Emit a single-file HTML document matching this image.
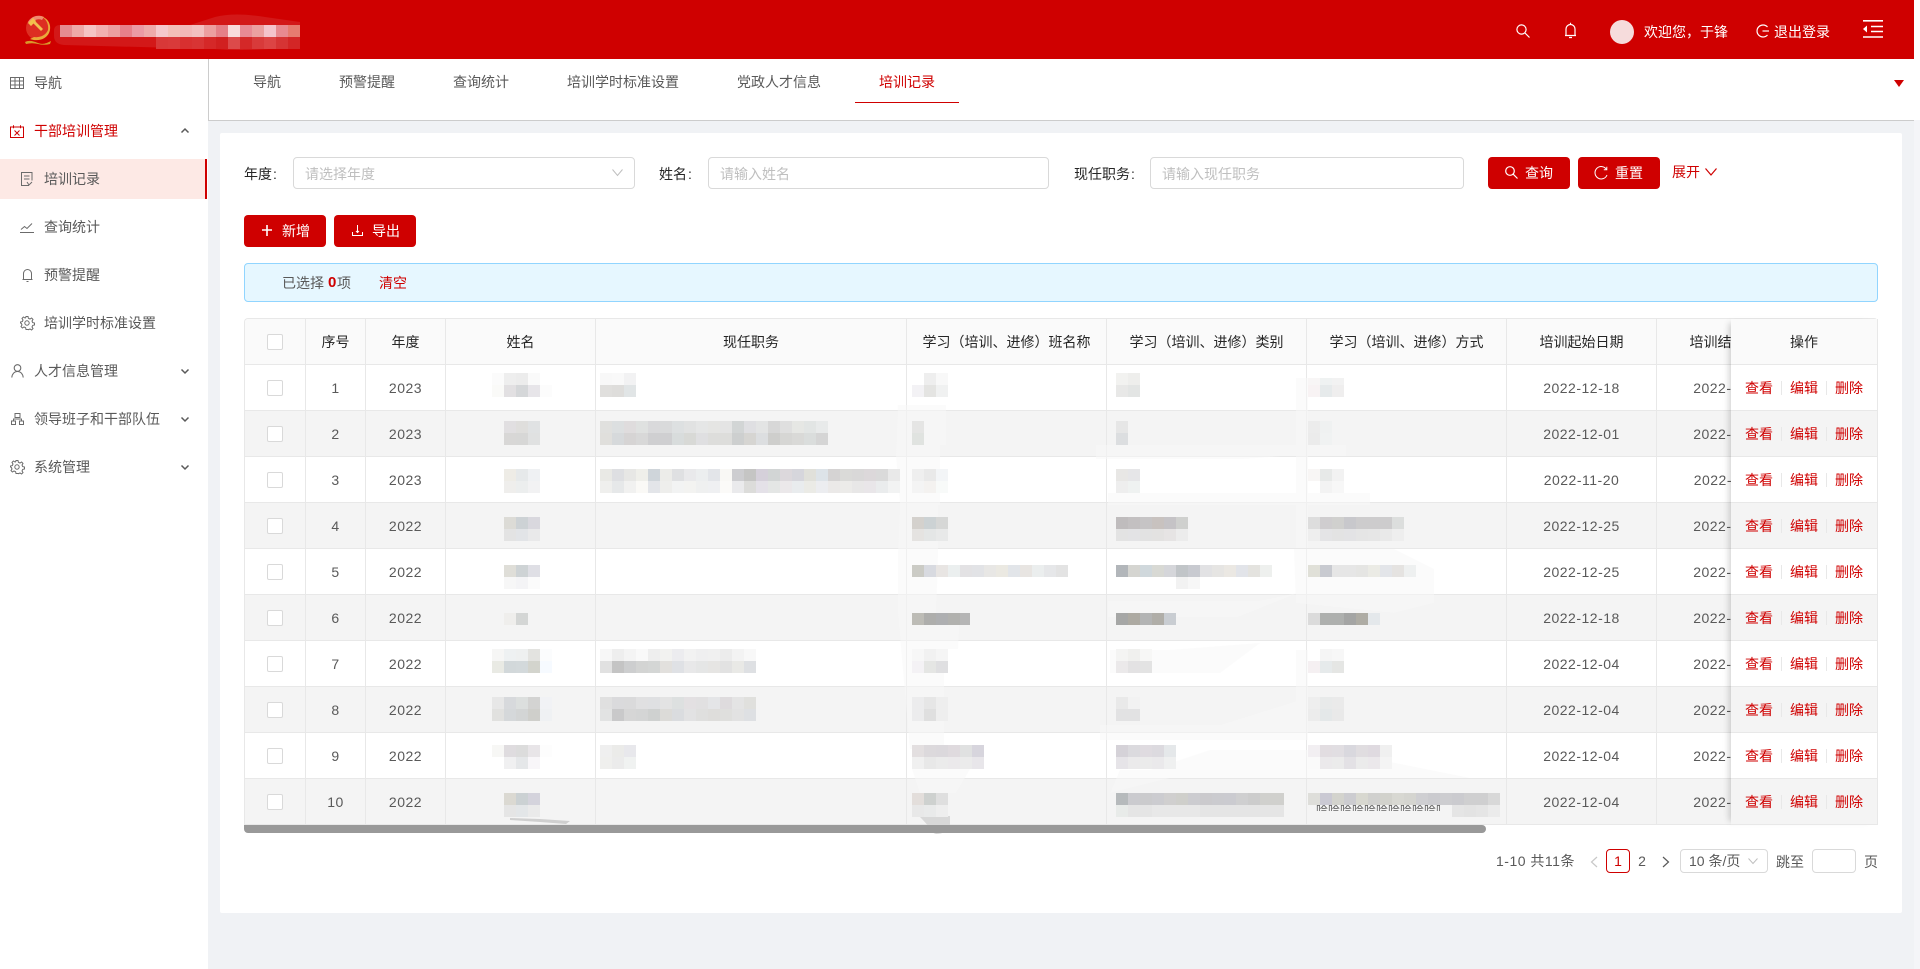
<!DOCTYPE html>
<html lang="zh-CN"><head><meta charset="utf-8"><title>培训记录</title>
<style>
*{box-sizing:border-box}
html,body{margin:0;padding:0;width:1920px;height:969px;overflow:hidden;background:#f0f2f5;font:14px/20px "Liberation Sans","Noto Sans CJK SC",sans-serif;color:#595959}
.a{position:absolute;white-space:nowrap}
.t{position:absolute;white-space:nowrap;line-height:20px;height:20px}
.w{color:#fff}.r{color:#cf0000}.d{color:#262626}
.ph{color:#bfbfbf}
.box{position:absolute;border:1px solid #d9d9d9;border-radius:4px;background:#fff}
.btn{position:absolute;background:#cf0000;border-radius:4px;height:32px;width:82px;top:157px}
svg.i{position:absolute;overflow:visible;fill:none}
table{border-collapse:separate;border-spacing:0;table-layout:fixed;width:1633px;position:absolute;left:0;top:0}
td,th{height:46px;padding:0;border-right:1px solid #e8e8e8;border-bottom:1px solid #e8e8e8;text-align:center;font-weight:400;overflow:hidden;white-space:nowrap;letter-spacing:.5px}
th{background:#fafafa;color:#262626;letter-spacing:0}
tr:nth-child(even) td{background:#f4f4f4}
.cb{display:inline-block;width:16px;height:16px;border:1px solid #d9d9d9;border-radius:2px;background:#fff;vertical-align:middle;margin-top:-2px}
.op{position:absolute;left:1731px;top:319px;width:147px;z-index:5;box-shadow:-6px 0 6px -4px rgba(0,0,0,.18);border-right:1px solid #e8e8e8}
.op div{height:46px;border-bottom:1px solid #e8e8e8;background:#fff;position:relative;line-height:47px}
.op div:nth-child(odd){background:#f4f4f4}
.op div:first-child{background:#fafafa;color:#262626;text-align:center}
.op span{position:absolute;top:0;color:#cf0000}
.op i{position:absolute;top:16px;width:1px;height:14px;background:#e8e8e8}
svg#m rect{width:12px;height:12px}
</style></head><body>

<!-- backgrounds -->
<div class="a" style="left:0;top:0;width:1914px;height:59px;background:#cf0000"></div>
<div class="a" style="left:1914px;top:0;width:6px;height:120px;background:#fff"></div>
<div class="a" style="left:1914px;top:120px;width:6px;height:849px;background:#f4f5f8"></div>
<div class="a" style="left:0;top:59px;width:208px;height:910px;background:#fff"></div>
<div class="a" style="left:208px;top:59px;width:1706px;height:62px;background:#fff;border-left:1px solid #ccc;border-bottom:1px solid #ccc"></div>
<div class="a" style="left:220px;top:133px;width:1682px;height:780px;background:#fff;border-radius:2px"></div>

<!-- header logo -->
<svg class="i" style="left:22px;top:13px" width="32" height="34" viewBox="0 0 32 34">
<circle cx="16" cy="15" r="12" fill="#dd2e22"/>
<path d="M6 9a12 12 0 0 1 16-5l-2 3a8 8 0 0 0-10 3l-1 3z" fill="#f08a70"/>
<path d="M18 3c6 2 9 8 8 14-2 5-8 8-14 7l-4 2c8 3 16 0 19-6 3-7 0-15-9-17z" fill="#e9a93a"/>
<path d="M9 8l10 10 2-2L11 6z" fill="#f0c050"/>
<path d="M6 10l5-5 3 3-5 5z" fill="#f3c04c"/>
<path d="M3 29c4-2 8-1 13 1s9 0 13-2l-1 3c-4 1-8 1-12 0s-8-1-12 0z" fill="#d9982a"/>
</svg>

<!-- header right -->
<svg class="i" style="left:1516px;top:24px" width="14" height="14" viewBox="0 0 14 14" stroke="#fff" stroke-width="1.2"><circle cx="5.5" cy="5.5" r="4.6"/><path d="M9 9l4.5 4.5"/></svg>
<svg class="i" style="left:1564px;top:22px" width="13" height="17" viewBox="0 0 13 17" stroke="#fff" stroke-width="1.2"><path d="M1 13.5h11M2 13.5V7a4.5 4.5 0 0 1 9 0v6.500"/><path d="M6.500 .8v1.500M5 15.500h3" /></svg>
<div class="a" style="left:1610px;top:20px;width:24px;height:24px;border-radius:50%;background:#f6dcdc"></div>
<div class="t w" style="left:1644px;top:22px">欢迎您，于锋</div>
<svg class="i" style="left:1756px;top:24px" width="14" height="14" viewBox="0 0 14 14" stroke="#fff" stroke-width="1.200"><path d="M11.500 3a6 6 0 1 0 0 8"/><path d="M6.500 7H13"/></svg>
<div class="t w" style="left:1774px;top:22px">退出登录</div>
<svg class="i" style="left:1863px;top:20px" width="20" height="18" viewBox="0 0 20 18"><path d="M0 .8h20M8 6.500h12M8 11.500h12M0 17h20" stroke="#fff" stroke-width="1.600"/><path d="M0 9l4-3.500v7z" fill="#fff"/></svg>

<!-- sidebar -->
<svg class="i" style="left:10px;top:77px" width="14" height="12" viewBox="0 0 14 12" stroke="#6b6b6b"><path d="M.5.500h13v11H.5zM.5 4h13M.5 8h13M5 .5v11M9.500.5v11"/></svg>
<div class="t" style="left:34px;top:73px">导航</div>
<svg class="i" style="left:10px;top:125px" width="14" height="13" viewBox="0 0 14 13" stroke="#cf0000"><path d="M.5 2h13v10.500H.5zM3.500.2v3M10.500.2v3M4.500 5.500l5 5M9.500 5.500l-5 5"/></svg>
<div class="t r" style="left:34px;top:121px">干部培训管理</div>
<svg class="i" style="left:181px;top:128px" width="8" height="5" viewBox="0 0 8 5" stroke="#595959" stroke-width="1.500"><path d="M.5 4.500L4 1l3.500 3.500"/></svg>
<div class="a" style="left:0;top:159px;width:207px;height:40px;background:#fde9e5;border-right:2px solid #cf0000"></div>
<svg class="i" style="left:21px;top:172px" width="12" height="14" viewBox="0 0 12 14" stroke="#6b6b6b"><path d="M8 13.500H.5V.5h10.500v8M3 4h5.500M3 7h5.500M6 10l2 3 3-3"/></svg>
<div class="t" style="left:44px;top:169px">培训记录</div>
<svg class="i" style="left:20px;top:221px" width="14" height="12" viewBox="0 0 14 12" stroke="#6b6b6b"><path d="M0 11.500h14M1 8.500l3.500-3 2.500 2 5-5"/></svg>
<div class="t" style="left:44px;top:217px">查询统计</div>
<svg class="i" style="left:22px;top:268px" width="11" height="14" viewBox="0 0 11 14" stroke="#6b6b6b"><path d="M.5 11.500h10M1.500 11.500V5.500a4 4 0 0 1 8 0v6M4.500 13.500h2"/></svg>
<div class="t" style="left:44px;top:265px">预警提醒</div>
<svg class="i" style="left:20px;top:316px" width="14" height="14" viewBox="0 0 14 14" stroke="#6b6b6b"><circle cx="7" cy="7" r="2.200"/><path d="M6 .5h2l.4 1.800 1.600.7 1.600-1 1.400 1.400-1 1.600.7 1.600 1.800.4v2l-1.800.4-.7 1.600 1 1.600-1.400 1.400-1.600-1-1.600.7L8 13.500H6l-.4-1.800-1.600-.7-1.600 1L1 10.600l1-1.600-.7-1.600L.5 7V6l1.800-.4.7-1.600-1-1.600L3.400 1l1.600 1 .6-.2z"/></svg>
<div class="t" style="left:44px;top:313px">培训学时标准设置</div>
<svg class="i" style="left:11px;top:364px" width="13" height="14" viewBox="0 0 13 14" stroke="#6b6b6b" stroke-width="1.100"><circle cx="6.500" cy="4" r="3.300"/><path d="M.8 13.500c.3-3.500 2.500-6 5.700-6s5.400 2.500 5.700 6"/></svg>
<div class="t" style="left:34px;top:361px">人才信息管理</div>
<svg class="i" style="left:181px;top:369px" width="8" height="5" viewBox="0 0 8 5" stroke="#595959" stroke-width="1.500"><path d="M.5.500L4 4 7.500.5"/></svg>
<svg class="i" style="left:11px;top:413px" width="13" height="12" viewBox="0 0 13 12" stroke="#6b6b6b"><path d="M4 .5h5v4H4zM.5 8h4v3.500h-4zM8.500 8h4v3.500h-4zM2.500 8V6h8v2"/></svg>
<div class="t" style="left:34px;top:409px">领导班子和干部队伍</div>
<svg class="i" style="left:181px;top:417px" width="8" height="5" viewBox="0 0 8 5" stroke="#595959" stroke-width="1.500"><path d="M.5.500L4 4 7.500.5"/></svg>
<svg class="i" style="left:10px;top:460px" width="14" height="14" viewBox="0 0 14 14" stroke="#6b6b6b"><circle cx="7" cy="7" r="2.200"/><path d="M6 .5h2l.4 1.800 1.600.7 1.600-1 1.400 1.400-1 1.600.7 1.600 1.800.4v2l-1.800.4-.7 1.600 1 1.600-1.400 1.400-1.600-1-1.600.7L8 13.500H6l-.4-1.800-1.600-.7-1.600 1L1 10.600l1-1.600-.7-1.600L.5 7V6l1.800-.4.7-1.600-1-1.600L3.400 1l1.600 1 .6-.2z"/></svg>
<div class="t" style="left:34px;top:457px">系统管理</div>
<svg class="i" style="left:181px;top:465px" width="8" height="5" viewBox="0 0 8 5" stroke="#595959" stroke-width="1.500"><path d="M.5.500L4 4 7.500.5"/></svg>

<!-- tabs -->
<div class="t" style="left:253px;top:72px">导航</div>
<div class="t" style="left:339px;top:72px">预警提醒</div>
<div class="t" style="left:453px;top:72px">查询统计</div>
<div class="t" style="left:567px;top:72px">培训学时标准设置</div>
<div class="t" style="left:737px;top:72px">党政人才信息</div>
<div class="t r" style="left:879px;top:72px">培训记录</div>
<div class="a" style="left:855px;top:102px;width:104px;height:1px;background:#cf0000"></div>
<svg class="i" style="left:1894px;top:80px" width="10" height="7" viewBox="0 0 10 7"><path d="M0 0h10L5 7z" fill="#cf0000"/></svg>

<!-- form -->
<div class="t d" style="left:244px;top:164px">年度<span style="margin-left:1px">:</span></div>
<div class="box" style="left:293px;top:157px;width:342px;height:32px"></div>
<div class="t ph" style="left:305px;top:164px">请选择年度</div>
<svg class="i" style="left:612px;top:169px" width="11" height="7" viewBox="0 0 11 7" stroke="#bfbfbf"><path d="M.5.500l5 6 5-6"/></svg>
<div class="t d" style="left:659px;top:164px">姓名<span style="margin-left:1px">:</span></div>
<div class="box" style="left:708px;top:157px;width:341px;height:32px"></div>
<div class="t ph" style="left:720px;top:164px">请输入姓名</div>
<div class="t d" style="left:1074px;top:164px">现任职务<span style="margin-left:1px">:</span></div>
<div class="box" style="left:1150px;top:157px;width:314px;height:32px"></div>
<div class="t ph" style="left:1162px;top:164px">请输入现任职务</div>
<div class="btn" style="left:1488px"></div>
<svg class="i" style="left:1505px;top:166px" width="13" height="13" viewBox="0 0 13 13" stroke="#fff" stroke-width="1.200"><circle cx="5" cy="5" r="4.300"/><path d="M8.200 8.200L12.500 12.500"/></svg>
<div class="t w" style="left:1525px;top:163px">查询</div>
<div class="btn" style="left:1578px"></div>
<svg class="i" style="left:1594px;top:166px" width="14" height="14" viewBox="0 0 14 14" stroke="#fff" stroke-width="1"><path d="M12.500 3.500A6.200 6.200 0 1 0 13 9"/><path d="M12.800.8v3h-3"/></svg>
<div class="t w" style="left:1615px;top:163px">重置</div>
<div class="t r" style="left:1672px;top:162px">展开</div>
<svg class="i" style="left:1705px;top:168px" width="12" height="8" viewBox="0 0 12 8" stroke="#cf0000" stroke-width="1.200"><path d="M.5.500l5.500 6.500L11.500.5"/></svg>

<div class="btn" style="left:244px;top:215px"></div>
<svg class="i" style="left:262px;top:225px" width="10" height="10" viewBox="0 0 10 10" stroke="#fff" stroke-width="1.600"><path d="M5 0v11M0 5h10"/></svg>
<div class="t w" style="left:282px;top:221px">新增</div>
<div class="btn" style="left:334px;top:215px"></div>
<svg class="i" style="left:352px;top:224px" width="11" height="12" viewBox="0 0 11 12" stroke="#fff"><path d="M.5 8v3.500h10V8M5.500 1v7M4 7l1.500 1.500L7 7"/></svg>
<div class="t w" style="left:372px;top:221px">导出</div>

<!-- alert -->
<div class="a" style="left:244px;top:263px;width:1634px;height:39px;background:#e6f7ff;border:1px solid #91d5ff;border-radius:4px"></div>
<div class="t" style="left:282px;top:273px">已选择</div>
<b class="t r" style="left:328px;top:273px;font-size:15px">0</b>
<div class="t" style="left:337px;top:273px">项</div>
<div class="t r" style="left:379px;top:273px">清空</div>

<!-- table -->
<div class="a" style="left:244px;top:318px;width:1634px;height:507px;border-top:1px solid #e8e8e8;border-left:1px solid #e8e8e8;border-radius:4px 4px 0 0;overflow:hidden">
<table><colgroup><col style="width:61px"><col style="width:60px"><col style="width:80px"><col style="width:150px"><col style="width:311px"><col style="width:200px"><col style="width:200px"><col style="width:200px"><col style="width:150px"><col style="width:150px"><col style="width:71px"></colgroup>
<thead><tr><th><span class="cb"></span></th><th>序号</th><th>年度</th><th>姓名</th><th>现任职务</th><th>学习（培训、进修）班名称</th><th>学习（培训、进修）类别</th><th>学习（培训、进修）方式</th><th>培训起始日期</th><th>培训结束日期</th><th></th></tr></thead>
<tbody>
<tr><td><span class="cb"></span></td><td>1</td><td>2023</td><td></td><td></td><td></td><td></td><td></td><td>2022-12-18</td><td>2022-12-20</td><td></td></tr>
<tr><td><span class="cb"></span></td><td>2</td><td>2023</td><td></td><td></td><td></td><td></td><td></td><td>2022-12-01</td><td>2022-12-05</td><td></td></tr>
<tr><td><span class="cb"></span></td><td>3</td><td>2023</td><td></td><td></td><td></td><td></td><td></td><td>2022-11-20</td><td>2022-11-25</td><td></td></tr>
<tr><td><span class="cb"></span></td><td>4</td><td>2022</td><td></td><td></td><td></td><td></td><td></td><td>2022-12-25</td><td>2022-12-28</td><td></td></tr>
<tr><td><span class="cb"></span></td><td>5</td><td>2022</td><td></td><td></td><td></td><td></td><td></td><td>2022-12-25</td><td>2022-12-28</td><td></td></tr>
<tr><td><span class="cb"></span></td><td>6</td><td>2022</td><td></td><td></td><td></td><td></td><td></td><td>2022-12-18</td><td>2022-12-20</td><td></td></tr>
<tr><td><span class="cb"></span></td><td>7</td><td>2022</td><td></td><td></td><td></td><td></td><td></td><td>2022-12-04</td><td>2022-12-08</td><td></td></tr>
<tr><td><span class="cb"></span></td><td>8</td><td>2022</td><td></td><td></td><td></td><td></td><td></td><td>2022-12-04</td><td>2022-12-08</td><td></td></tr>
<tr><td><span class="cb"></span></td><td>9</td><td>2022</td><td></td><td></td><td></td><td></td><td></td><td>2022-12-04</td><td>2022-12-08</td><td></td></tr>
<tr><td><span class="cb"></span></td><td>10</td><td>2022</td><td></td><td></td><td></td><td></td><td></td><td>2022-12-04</td><td>2022-12-08</td><td></td></tr>
</tbody></table></div>

<div class="op">
<div>操作</div>
<div><span style="left:14px">查看</span><i style="left:50px"></i><span style="left:59px">编辑</span><i style="left:95px"></i><span style="left:104px">删除</span></div>
<div><span style="left:14px">查看</span><i style="left:50px"></i><span style="left:59px">编辑</span><i style="left:95px"></i><span style="left:104px">删除</span></div>
<div><span style="left:14px">查看</span><i style="left:50px"></i><span style="left:59px">编辑</span><i style="left:95px"></i><span style="left:104px">删除</span></div>
<div><span style="left:14px">查看</span><i style="left:50px"></i><span style="left:59px">编辑</span><i style="left:95px"></i><span style="left:104px">删除</span></div>
<div><span style="left:14px">查看</span><i style="left:50px"></i><span style="left:59px">编辑</span><i style="left:95px"></i><span style="left:104px">删除</span></div>
<div><span style="left:14px">查看</span><i style="left:50px"></i><span style="left:59px">编辑</span><i style="left:95px"></i><span style="left:104px">删除</span></div>
<div><span style="left:14px">查看</span><i style="left:50px"></i><span style="left:59px">编辑</span><i style="left:95px"></i><span style="left:104px">删除</span></div>
<div><span style="left:14px">查看</span><i style="left:50px"></i><span style="left:59px">编辑</span><i style="left:95px"></i><span style="left:104px">删除</span></div>
<div><span style="left:14px">查看</span><i style="left:50px"></i><span style="left:59px">编辑</span><i style="left:95px"></i><span style="left:104px">删除</span></div>
<div><span style="left:14px">查看</span><i style="left:50px"></i><span style="left:59px">编辑</span><i style="left:95px"></i><span style="left:104px">删除</span></div>
</div>

<!-- redaction mosaics -->
<svg id="m" class="i" style="left:0;top:0;z-index:3" width="1920" height="969" viewBox="0 0 1920 969">
<!-- header smear -->
<path d="M60 25q-6 0-6 6v5q0 8 10 9l150 4q40 3 86-3V22l-35-5q-30-5-50 0l-25 8z" fill="#d31818"/>
<!-- table smears -->
<g fill="#f8f8f8" fill-opacity=".5">
<path d="M898 405h48v40h-6v60h-2v50l-2 60l-38-2v-60l2-50l-4-48zM898 613h62l-2 36h-14v100l-34 0zM912 769h58l-14 24h-36z"/>
<path d="M1096 445h250v11h-64l-40 3h-146zM1108 493h262v12h-262zM1296 378h12v170h-12zM1294 549h100l40 20v34l-40 10l-98-10zM1108 601h150l40-8l-60 24h-130zM1110 650h60l90-7l-40 30h-110zM1296 650h12v90h-12zM1100 725h120l80-25v40h-200zM1120 770h30l60-20h100l60 8l100 20h-300l-60 15z"/>
</g>
<path d="M920 817q8 8 10 12t6 5q10 0 14-8v-10z" fill="#d8d8d8"/>
<path d="M510 818l30 1l30 2l-4 3l-26-2l-30-2z" fill="#cfcfcf"/>

<!-- header mosaic -->
<g transform="translate(0 25)"><rect x="60" fill="#e58c90"/><rect x="72" fill="#eeaaa8"/><rect x="84" fill="#f5c4c4"/><rect x="96" fill="#f2b0b0"/><rect x="108" fill="#ec9fa0"/><rect x="120" fill="#e7808a"/><rect x="132" fill="#eb9aa4"/><rect x="144" fill="#eeaaaa"/><rect x="156" fill="#f5c8cc"/><rect x="168" fill="#f3c0b8"/><rect x="180" fill="#f2b8b8"/><rect x="192" fill="#f2c0c0"/><rect x="204" fill="#ec9fa0"/><rect x="216" fill="#e58088"/><rect x="228" fill="#f8dcdc"/><rect x="240" fill="#e88a94"/><rect x="252" fill="#eba0a0"/><rect x="264" fill="#f4c4cc"/><rect x="276" fill="#e88a90"/><rect x="288" fill="#e67c70"/></g>
<g transform="translate(0 37)"><rect x="156" fill="#d83838"/><rect x="168" fill="#d93a3a"/><rect x="180" fill="#d83030"/><rect x="192" fill="#d83434"/><rect x="204" fill="#d52828"/><rect x="216" fill="#d12020"/><rect x="228" fill="#dc4a4a"/><rect x="240" fill="#d42828"/><rect x="252" fill="#d83a3a"/><rect x="264" fill="#dc4444"/><rect x="276" fill="#d63434"/><rect x="288" fill="#d32626"/></g>

<!-- row1 -->
<g transform="translate(0 373)"><rect x="492" fill="#fbfbfb"/><rect x="504" fill="#eee"/><rect x="516" fill="#ececec"/><rect x="528" fill="#fafafa"/><rect x="600" fill="#f8f8f8"/><rect x="612" fill="#f9f9f9"/><rect x="624" fill="#f2f2f3"/><rect x="924" fill="#eee"/><rect x="936" fill="#f8f8f8"/><rect x="1116" fill="#f2f2f0"/><rect x="1128" fill="#eeeeec"/></g>
<g transform="translate(0 385)"><rect x="492" fill="#fafaf8"/><rect x="504" fill="#e2e0e2"/><rect x="516" fill="#d5d7d9"/><rect x="528" fill="#e7e5e9"/><rect x="540" fill="#fcfcfc"/><rect x="600" fill="#e0dfdd"/><rect x="612" fill="#dedddb"/><rect x="624" fill="#e1e5e6"/><rect x="912" fill="#f3f2f5"/><rect x="924" fill="#e4e4e2"/><rect x="936" fill="#f0f1f1"/><rect x="1116" fill="#e8e8e7"/><rect x="1128" fill="#e3e5e4"/><rect x="1308" fill="#f8f3f4"/><rect x="1320" fill="#e6eaeb"/><rect x="1332" fill="#efeeee"/></g>
<g transform="translate(0 378)"><rect x="1308" fill="#f8f6f6" style="height:7px"/><rect x="1320" fill="#eff2f2" style="height:7px"/><rect x="1332" fill="#f2f2f2" style="height:7px"/></g>
<!-- row2 -->
<g transform="translate(0 421)"><rect x="504" fill="#e1dfe1"/><rect x="516" fill="#dfdedc"/><rect x="528" fill="#e0e2e3"/><rect x="600" fill="#e0e0de"/><rect x="612" fill="#dcdfe0"/><rect x="624" fill="#dfdcdd"/><rect x="636" fill="#dfe1e0"/><rect x="648" fill="#d9d9db"/><rect x="660" fill="#d9dadb"/><rect x="672" fill="#dde0e1"/><rect x="684" fill="#e1e2e2"/><rect x="696" fill="#e5e6e6"/><rect x="708" fill="#e5e5e3"/><rect x="720" fill="#e4e4e4"/><rect x="732" fill="#d2d5d5"/><rect x="744" fill="#dfdfe2"/><rect x="756" fill="#e3e4e4"/><rect x="768" fill="#d7d7d7"/><rect x="780" fill="#dfdfdf"/><rect x="792" fill="#e6e7e4"/><rect x="804" fill="#e2e5e4"/><rect x="816" fill="#e8eaea"/><rect x="912" fill="#e5e5e4"/><rect x="1116" fill="#e6e6e6"/><rect x="1308" fill="#ececec"/><rect x="1320" fill="#eff1f1"/></g>
<g transform="translate(0 433)"><rect x="504" fill="#d8d7d6"/><rect x="516" fill="#d7d7d6"/><rect x="528" fill="#e0e1e1"/><rect x="600" fill="#e0dfdc"/><rect x="612" fill="#d6d9db"/><rect x="624" fill="#d6d4d4"/><rect x="636" fill="#d8d8d8"/><rect x="648" fill="#cfcfd1"/><rect x="660" fill="#cfcfd1"/><rect x="672" fill="#d8dcdc"/><rect x="684" fill="#d8d9d6"/><rect x="696" fill="#dfdfe1"/><rect x="708" fill="#dddddb"/><rect x="720" fill="#dddddb"/><rect x="732" fill="#cdcfcf"/><rect x="744" fill="#d6d5d2"/><rect x="756" fill="#dcdee0"/><rect x="768" fill="#cececc"/><rect x="780" fill="#d6d6d4"/><rect x="792" fill="#d9d9d7"/><rect x="804" fill="#dadddc"/><rect x="816" fill="#d5d5d5"/><rect x="912" fill="#e0e3e0"/><rect x="1116" fill="#dcdee0"/><rect x="1308" fill="#ebebeb"/><rect x="1320" fill="#f0f2f2"/></g>
<!-- row3 -->
<g transform="translate(0 469)"><rect x="504" fill="#eeece6"/><rect x="516" fill="#e6e9ea"/><rect x="528" fill="#eff1f3"/><rect x="600" fill="#e9e9e5"/><rect x="612" fill="#dedfe2"/><rect x="624" fill="#e7e7e5"/><rect x="636" fill="#efefea"/><rect x="648" fill="#cfd5da"/><rect x="660" fill="#ecece9"/><rect x="672" fill="#dfe0e2"/><rect x="684" fill="#e9e9eb"/><rect x="696" fill="#eceeef"/><rect x="708" fill="#e3e5e9"/><rect x="720" fill="#f9f8f5"/><rect x="732" fill="#cdcdd0"/><rect x="744" fill="#c5c5c4"/><rect x="756" fill="#d5d0da"/><rect x="768" fill="#d2d5d5"/><rect x="780" fill="#dcd8dc"/><rect x="792" fill="#d6d6dc"/><rect x="804" fill="#e0e0da"/><rect x="816" fill="#dde3e8"/><rect x="828" fill="#d5d3d3"/><rect x="840" fill="#dadad8"/><rect x="852" fill="#d9d8d8"/><rect x="864" fill="#dcd8da"/><rect x="876" fill="#dadada"/><rect x="888" fill="#e9e9e9"/><rect x="912" fill="#efefef"/><rect x="924" fill="#e9e9e9"/><rect x="936" fill="#f3f5f7"/><rect x="1116" fill="#e8e7e5"/><rect x="1128" fill="#e6e6e8"/><rect x="1308" fill="#f8f6f5"/><rect x="1320" fill="#e7e9e8"/><rect x="1332" fill="#f2f2f2"/></g>
<g transform="translate(0 481)"><rect x="504" fill="#efeeec"/><rect x="516" fill="#eceeee"/><rect x="528" fill="#f2f2f3"/><rect x="600" fill="#efefed"/><rect x="612" fill="#e6e8e9"/><rect x="624" fill="#f1f1f0"/><rect x="636" fill="#faf9f6"/><rect x="648" fill="#e3e5e9"/><rect x="660" fill="#eeeeec"/><rect x="672" fill="#f2f3f3"/><rect x="684" fill="#f3f3f1"/><rect x="696" fill="#eff0f0"/><rect x="708" fill="#eff0f2"/><rect x="720" fill="#fbfaf8"/><rect x="732" fill="#eaeaec"/><rect x="744" fill="#dcdcda"/><rect x="756" fill="#e4e1e8"/><rect x="768" fill="#e4e6e5"/><rect x="780" fill="#ebe8ea"/><rect x="792" fill="#e9ecee"/><rect x="804" fill="#ebebe6"/><rect x="816" fill="#ecedf0"/><rect x="828" fill="#ebe9e8"/><rect x="840" fill="#ecebe9"/><rect x="852" fill="#e8e7e7"/><rect x="864" fill="#e9e6e9"/><rect x="876" fill="#eaeced"/><rect x="888" fill="#f2f3f3"/><rect x="912" fill="#f4f4f4"/><rect x="924" fill="#f4f2f0"/><rect x="936" fill="#f8faf9"/><rect x="1116" fill="#eee"/><rect x="1128" fill="#eff2f1"/><rect x="1320" fill="#f3f3f3"/><rect x="1332" fill="#f7f7f7"/></g>
<!-- row4 -->
<g transform="translate(0 517)"><rect x="504" fill="#dcdbd6"/><rect x="516" fill="#cdd2d5"/><rect x="528" fill="#d9d8de"/><rect x="912" fill="#d4d1cd"/><rect x="924" fill="#ccd2d4"/><rect x="936" fill="#d6d7d6"/><rect x="1116" fill="#bfbcbd"/><rect x="1128" fill="#c3c0c1"/><rect x="1140" fill="#c6c4c5"/><rect x="1152" fill="#c8c2bf"/><rect x="1164" fill="#c5c3c6"/><rect x="1176" fill="#cfd0ce"/><rect x="1308" fill="#ddd"/><rect x="1320" fill="#cfcdcf"/><rect x="1332" fill="#d0d0ce"/><rect x="1344" fill="#c8c8cc"/><rect x="1356" fill="#cdcccd"/><rect x="1368" fill="#cdcccd"/><rect x="1380" fill="#cdcccd"/><rect x="1392" fill="#dcdedd"/></g>
<g transform="translate(0 529)"><rect x="504" fill="#e3e3e3"/><rect x="516" fill="#e2e4e7"/><rect x="528" fill="#e9e9ea"/><rect x="912" fill="#e5e3e1"/><rect x="924" fill="#e4e6e6"/><rect x="936" fill="#e8e9e9"/><rect x="1116" fill="#e3e3e3"/><rect x="1128" fill="#e3e3e5"/><rect x="1140" fill="#e2e2e2"/><rect x="1152" fill="#e3e2e1"/><rect x="1164" fill="#e6e4e4"/><rect x="1176" fill="#ececec"/><rect x="1308" fill="#eee"/><rect x="1320" fill="#e4e4e6"/><rect x="1332" fill="#e3e3e3"/><rect x="1344" fill="#e3e3e5"/><rect x="1356" fill="#e5e5e5"/><rect x="1368" fill="#e6e6e6"/><rect x="1380" fill="#e9e9e9"/><rect x="1392" fill="#eee"/></g>
<!-- row5 -->
<g transform="translate(0 565)"><rect x="504" fill="#dfded8"/><rect x="516" fill="#ced3d5"/><rect x="528" fill="#dfdfe5"/><rect x="912" fill="#cbcbc5"/><rect x="924" fill="#d8dae0"/><rect x="936" fill="#e8e5e3"/><rect x="948" fill="#ebefef"/><rect x="960" fill="#e3e2e4"/><rect x="972" fill="#e2e3e6"/><rect x="984" fill="#e8e7e5"/><rect x="996" fill="#ebe9e2"/><rect x="1008" fill="#e2e5e9"/><rect x="1020" fill="#e8e5e2"/><rect x="1032" fill="#ebeeee"/><rect x="1044" fill="#e6e7e9"/><rect x="1056" fill="#e3e3e3"/><rect x="1116" fill="#b2b6ba"/><rect x="1128" fill="#d5d5d1"/><rect x="1140" fill="#d0d8dc"/><rect x="1152" fill="#d8d9d4"/><rect x="1164" fill="#d5d6da"/><rect x="1176" fill="#c1c5c8"/><rect x="1188" fill="#c8cad0"/><rect x="1200" fill="#e2e2e4"/><rect x="1212" fill="#e6e5e3"/><rect x="1224" fill="#ebe8e3"/><rect x="1236" fill="#e2e4e9"/><rect x="1248" fill="#e4e3df"/><rect x="1260" fill="#eef0ee"/><rect x="1308" fill="#e0e0d8"/><rect x="1320" fill="#c8cad0"/><rect x="1332" fill="#e6e6e6"/><rect x="1344" fill="#e6e6e6"/><rect x="1356" fill="#e5e5e3"/><rect x="1368" fill="#ebebe5"/><rect x="1380" fill="#e3e5e9"/><rect x="1392" fill="#e5e3e1"/><rect x="1404" fill="#eef0f0"/></g>
<g transform="translate(0 577)"><rect x="504" fill="#f7f7f7"/><rect x="516" fill="#f4f4f6"/><rect x="528" fill="#fbfbfb"/><rect x="1176" fill="#f2f2f2"/><rect x="1188" fill="#f7f7f7"/></g>
<!-- row6 -->
<g transform="translate(0 613)"><rect x="504" fill="#efeeec"/><rect x="516" fill="#d4d6d5"/><rect x="912" fill="#bdbcb6"/><rect x="924" fill="#aeaeac"/><rect x="936" fill="#aeafb1"/><rect x="948" fill="#b1b1ae"/><rect x="960" fill="#b5b5b5" style="width:10px"/><rect x="1116" fill="#a6a7a6"/><rect x="1128" fill="#adaaa2"/><rect x="1140" fill="#b3b4b4"/><rect x="1152" fill="#b0aea8"/><rect x="1164" fill="#c9cdd2"/><rect x="1308" fill="#dbdbdb"/><rect x="1320" fill="#aeb0ae"/><rect x="1332" fill="#aeb0ae"/><rect x="1344" fill="#a4a5a4"/><rect x="1356" fill="#aeaca4"/><rect x="1368" fill="#e4e8eb"/></g>
<!-- row7 -->
<g transform="translate(0 649)"><rect x="492" fill="#f6f6f5"/><rect x="504" fill="#eef1f2"/><rect x="516" fill="#eef0f0"/><rect x="528" fill="#e3e3e0"/><rect x="540" fill="#fbfcfd"/><rect x="600" fill="#f7f7f7"/><rect x="612" fill="#eee"/><rect x="624" fill="#f4f4f4"/><rect x="636" fill="#f9f9f9"/><rect x="648" fill="#eee"/><rect x="660" fill="#f2f2f0"/><rect x="672" fill="#ececef"/><rect x="684" fill="#f2f2f2"/><rect x="696" fill="#efeff0"/><rect x="708" fill="#f0f0f0"/><rect x="720" fill="#ececec"/><rect x="732" fill="#f3f3f3"/><rect x="744" fill="#f8f8f8"/><rect x="912" fill="#f7f7f7"/><rect x="924" fill="#f1f1f1"/><rect x="936" fill="#f5f5f5"/><rect x="1116" fill="#f4f4f3"/><rect x="1128" fill="#f0f0ee"/><rect x="1140" fill="#f7f7f6"/><rect x="1320" fill="#f5f5f5"/><rect x="1332" fill="#f7f7f7"/></g>
<g transform="translate(0 661)"><rect x="492" fill="#e9eae4"/><rect x="504" fill="#d2d8da"/><rect x="516" fill="#d3d9db"/><rect x="528" fill="#d3d4cd"/><rect x="540" fill="#f6faff"/><rect x="600" fill="#e1e1e1"/><rect x="612" fill="#c4c4c4"/><rect x="624" fill="#cdcecf"/><rect x="636" fill="#d3d4d3"/><rect x="648" fill="#d4d6d5"/><rect x="660" fill="#e2e0dd"/><rect x="672" fill="#dfe1e5"/><rect x="684" fill="#e8e8e9"/><rect x="696" fill="#e5e6e6"/><rect x="708" fill="#e6e5e3"/><rect x="720" fill="#e2e2e2"/><rect x="732" fill="#e9e9e6"/><rect x="744" fill="#dee0e3"/><rect x="912" fill="#f4f2f5"/><rect x="924" fill="#e5e6e4"/><rect x="936" fill="#dfdfe1"/><rect x="1116" fill="#ebe9ea"/><rect x="1128" fill="#e3e2e3"/><rect x="1140" fill="#e3e3e3"/><rect x="1308" fill="#f5f0f2"/><rect x="1320" fill="#e6eaeb"/><rect x="1332" fill="#e5e6e4"/></g>
<!-- row8 -->
<g transform="translate(0 697)"><rect x="492" fill="#e7e7e7"/><rect x="504" fill="#d7d9dc"/><rect x="516" fill="#dcdfde"/><rect x="528" fill="#d3d3d2"/><rect x="540" fill="#f1f2f5"/><rect x="600" fill="#e0e0e0"/><rect x="612" fill="#dadadc"/><rect x="624" fill="#dadadb"/><rect x="636" fill="#e0e0e1"/><rect x="648" fill="#dfe0e2"/><rect x="660" fill="#e3e3e3"/><rect x="672" fill="#dde0e0"/><rect x="684" fill="#e3e0e2"/><rect x="696" fill="#e1e0e1"/><rect x="708" fill="#e4e5e7"/><rect x="720" fill="#dedbdd"/><rect x="732" fill="#e4e4e4"/><rect x="744" fill="#e0e0dd"/><rect x="912" fill="#ececed"/><rect x="924" fill="#e6e6e6"/><rect x="936" fill="#eee"/><rect x="1116" fill="#e9e9e9"/><rect x="1128" fill="#f2f2f2"/><rect x="1308" fill="#eee"/><rect x="1320" fill="#e8eaea"/><rect x="1332" fill="#eaeaea"/></g>
<g transform="translate(0 709)"><rect x="492" fill="#e1e1df"/><rect x="504" fill="#d5d8da"/><rect x="516" fill="#d3d5d5"/><rect x="528" fill="#cfcfcb"/><rect x="540" fill="#eff1f3"/><rect x="600" fill="#e2e3e3"/><rect x="612" fill="#c9c9ca"/><rect x="624" fill="#d6d6d6"/><rect x="636" fill="#d4d5d5"/><rect x="648" fill="#cfd1d0"/><rect x="660" fill="#dcdbd8"/><rect x="672" fill="#dadcdf"/><rect x="684" fill="#e2e2e3"/><rect x="696" fill="#dfdfde"/><rect x="708" fill="#dedddb"/><rect x="720" fill="#dfdfdd"/><rect x="732" fill="#e2e2e2"/><rect x="744" fill="#dee0e3"/><rect x="912" fill="#ececed"/><rect x="924" fill="#dfdfdf"/><rect x="936" fill="#eee"/><rect x="1116" fill="#e2e2e3"/><rect x="1128" fill="#e2e2e3"/><rect x="1308" fill="#ececec"/><rect x="1320" fill="#e4e8e9"/><rect x="1332" fill="#e9e9e9"/></g>
<!-- row9 -->
<g transform="translate(0 745)"><rect x="492" fill="#f7f7f5"/><rect x="504" fill="#dfdcdf"/><rect x="516" fill="#dcdcdc"/><rect x="528" fill="#e8e5e8"/><rect x="540" fill="#fdfdfd"/><rect x="600" fill="#efefef"/><rect x="612" fill="#ebebe9"/><rect x="624" fill="#e8e8ec"/><rect x="912" fill="#e3dfe0"/><rect x="924" fill="#dcd9dc"/><rect x="936" fill="#dbd8dc"/><rect x="948" fill="#dfdade"/><rect x="960" fill="#e0e1e1"/><rect x="972" fill="#d7d5dd"/><rect x="1116" fill="#d5d2d8"/><rect x="1128" fill="#dbdade"/><rect x="1140" fill="#dfdbe0"/><rect x="1152" fill="#dcdadf"/><rect x="1164" fill="#e5e8ea"/><rect x="1308" fill="#f2eff2"/><rect x="1320" fill="#e2dde1"/><rect x="1332" fill="#e1dee2"/><rect x="1344" fill="#d9d8de"/><rect x="1356" fill="#e0dde0"/><rect x="1368" fill="#dfdae0"/><rect x="1380" fill="#f0f0f0"/></g>
<g transform="translate(0 757)"><rect x="504" fill="#f0f0f1"/><rect x="516" fill="#e5e7e9"/><rect x="528" fill="#f8f6f9"/><rect x="600" fill="#efefed"/><rect x="612" fill="#ebebeb"/><rect x="624" fill="#f0f2f1"/><rect x="912" fill="#f0f0f0"/><rect x="924" fill="#e8e8e8"/><rect x="936" fill="#ebebeb"/><rect x="948" fill="#ebe9eb"/><rect x="960" fill="#ebebeb"/><rect x="972" fill="#e8e6ea"/><rect x="1116" fill="#e6e4e8"/><rect x="1128" fill="#ebeaeb"/><rect x="1140" fill="#ebebeb"/><rect x="1152" fill="#eae9eb"/><rect x="1164" fill="#eff0f0"/><rect x="1308" fill="#fafafa"/><rect x="1320" fill="#ebe9eb"/><rect x="1332" fill="#ebebeb"/><rect x="1344" fill="#e3e1e5"/><rect x="1356" fill="#ebebeb"/><rect x="1368" fill="#ebe8eb"/><rect x="1380" fill="#f4f4f4"/></g>
<!-- row10 -->
<g transform="translate(0 793)"><rect x="504" fill="#dbd9d2"/><rect x="516" fill="#cbd1d3"/><rect x="528" fill="#d4d3dc"/><rect x="912" fill="#e3dedb"/><rect x="924" fill="#ced1cf"/><rect x="936" fill="#dfdfdf"/><rect x="1116" fill="#b6babc"/><rect x="1128" fill="#cbcbcf"/><rect x="1140" fill="#cbcbcd"/><rect x="1152" fill="#ccccd0"/><rect x="1164" fill="#d0cfcf"/><rect x="1176" fill="#cfcfcb"/><rect x="1188" fill="#ccccd0"/><rect x="1200" fill="#cbcacd"/><rect x="1212" fill="#cbcbcf"/><rect x="1224" fill="#cbcbd0"/><rect x="1236" fill="#cfcfd0"/><rect x="1248" fill="#ccc"/><rect x="1260" fill="#d0d0cd"/><rect x="1272" fill="#d0d0cd"/><rect x="1308" fill="#dededa"/><rect x="1320" fill="#cac9d3"/><rect x="1332" fill="#d3d3cd"/><rect x="1344" fill="#ccccd0"/><rect x="1356" fill="#d8d8d0"/><rect x="1368" fill="#d0d0ce"/><rect x="1380" fill="#d2d2cc"/><rect x="1392" fill="#d8d8d2"/><rect x="1404" fill="#d5d5d0"/><rect x="1416" fill="#cfcfd2"/><rect x="1428" fill="#cbcbcf"/><rect x="1440" fill="#cdcdd0"/><rect x="1452" fill="#cbcbcf"/><rect x="1464" fill="#cfcfd0"/><rect x="1476" fill="#cfcfd0"/><rect x="1488" fill="#d8d8d8"/></g>
<g transform="translate(0 805)"><rect x="504" fill="#e5e5e5"/><rect x="516" fill="#e3e6e8"/><rect x="528" fill="#eaeaea"/><rect x="912" fill="#e8e8e8"/><rect x="924" fill="#e9eaea"/><rect x="936" fill="#eee"/><rect x="1116" fill="#e8ebe9"/><rect x="1128" fill="#e5e5e5"/><rect x="1140" fill="#e5e5e5"/><rect x="1152" fill="#e8e8e8"/><rect x="1164" fill="#e8e8e8"/><rect x="1176" fill="#e8e8e8"/><rect x="1188" fill="#e8e8e8"/><rect x="1200" fill="#e5e5e5"/><rect x="1212" fill="#e5e5e5"/><rect x="1224" fill="#e5e5e5"/><rect x="1236" fill="#e5e5e5"/><rect x="1248" fill="#e5e5e5"/><rect x="1260" fill="#e5e5e5"/><rect x="1272" fill="#e5e5e5"/><rect x="1452" fill="#e5e5e5"/><rect x="1464" fill="#e3e3e3"/><rect x="1476" fill="#e5e5e5"/><rect x="1488" fill="#ebebeb"/></g>
</svg>
<div class="a" style="left:1316px;top:805px;width:124px;height:6px;overflow:hidden;z-index:4;color:#666;font-size:12px;line-height:10px;letter-spacing:0">哈哈哈哈哈哈哈哈哈哈哈</div>

<!-- fake scrollbar -->
<div class="a" style="left:244px;top:825px;width:1242px;height:8px;background:#999;border-radius:0 4px 4px 4px;z-index:4"></div>

<!-- pagination -->
<div class="t" style="left:1496px;top:851px;letter-spacing:.5px">1-10 共11条</div>
<svg class="i" style="left:1590px;top:856px" width="8" height="12" viewBox="0 0 8 12" stroke="#c8c8c8" stroke-width="1.200"><path d="M7 1L1.500 6 7 11"/></svg>
<div class="box r" style="left:1606px;top:849px;width:24px;height:24px;border-color:#cf0000;text-align:center;line-height:22px">1</div>
<div class="t" style="left:1634px;top:851px;width:16px;text-align:center">2</div>
<svg class="i" style="left:1662px;top:856px" width="8" height="12" viewBox="0 0 8 12" stroke="#595959" stroke-width="1.200"><path d="M1 1l5.500 5L1 11"/></svg>
<div class="box" style="left:1680px;top:849px;width:88px;height:24px"></div>
<div class="t" style="left:1689px;top:851px">10 条/页</div>
<svg class="i" style="left:1748px;top:858px" width="10" height="6" viewBox="0 0 10 6" stroke="#bfbfbf"><path d="M.5.500L5 5.500 9.500.5"/></svg>
<div class="t" style="left:1776px;top:852px">跳至</div>
<div class="box" style="left:1812px;top:849px;width:44px;height:24px"></div>
<div class="t" style="left:1864px;top:852px">页</div>
</body></html>
